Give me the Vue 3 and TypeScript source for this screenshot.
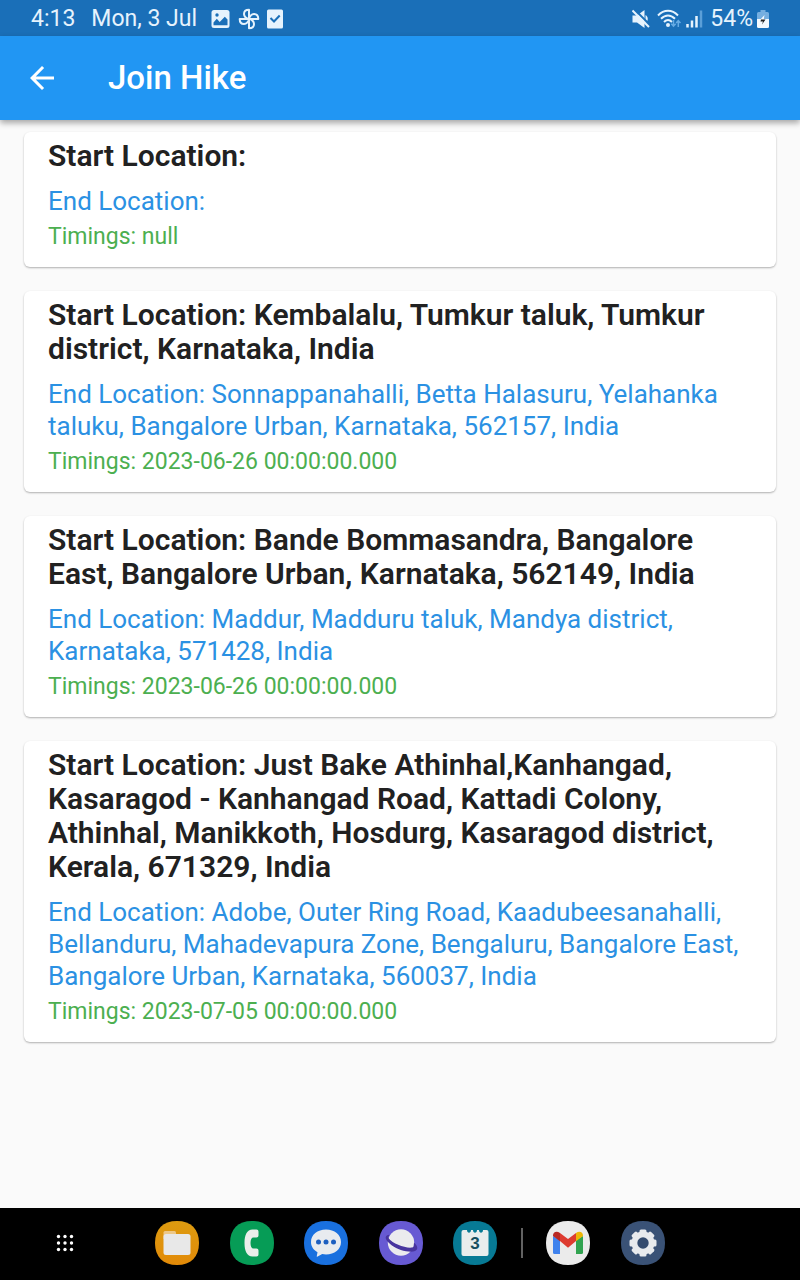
<script setup lang="ts">
interface Hike {
  start: string
  end: string
  timings: string
}

const hikes: Hike[] = [
  { start: '', end: '', timings: 'null' },
  {
    start: 'Kembalalu, Tumkur taluk, Tumkur district, Karnataka, India',
    end: 'Sonnappanahalli, Betta Halasuru, Yelahanka taluku, Bangalore Urban, Karnataka, 562157, India',
    timings: '2023-06-26 00:00:00.000',
  },
  {
    start: 'Bande Bommasandra, Bangalore East, Bangalore Urban, Karnataka, 562149, India',
    end: 'Maddur, Madduru taluk, Mandya district, Karnataka, 571428, India',
    timings: '2023-06-26 00:00:00.000',
  },
  {
    start:
      'Just Bake Athinhal,Kanhangad, Kasaragod - Kanhangad Road, Kattadi Colony, Athinhal, Manikkoth, Hosdurg, Kasaragod district, Kerala, 671329, India',
    end: 'Adobe, Outer Ring Road, Kaadubeesanahalli, Bellanduru, Mahadevapura Zone, Bengaluru, Bangalore East, Bangalore Urban, Karnataka, 560037, India',
    timings: '2023-07-05 00:00:00.000',
  },
]

const squircle = 'M22 0C36 0 44 8 44 22S36 44 22 44 0 36 0 22 8 0 22 0Z'
const dots = [2.5, 9, 15.5]
const teeth = [0, 45, 90, 135, 180, 225, 270, 315]
</script>

<template>
  <div class="screen">
    <div class="status">
      <span class="clock">4:13</span>
      <span class="date">Mon, 3 Jul</span>
      <svg class="st-icon" width="20" height="20" viewBox="0 0 20 20" aria-hidden="true">
        <rect x="0.500" y="1" width="18" height="18" rx="2.500" fill="#e6f3fd" />
        <circle cx="6" cy="6" r="1.700" fill="#1a6fb8" />
        <path d="M2.500 16.200V13.500L5.800 9.800L8.700 13L13.800 7.700L16.500 10.500V16.200Z" fill="#1a6fb8" />
      </svg>
      <svg class="st-icon" width="22" height="22" viewBox="0 0 22 22" aria-hidden="true">
        <g fill="none" stroke="#e6f3fd" stroke-width="2" stroke-linejoin="round">
          <path
            v-for="a in [0, 90, 180, 270]"
            :key="a"
            :transform="`rotate(${a} 11 11)`"
            d="M11 11V1.700C7.500 1.700 6 3.800 6 6C6 7.400 6.600 8.400 7.400 9.200C8.400 10.300 9.700 11 11 11Z"
          />
        </g>
      </svg>
      <svg class="st-icon" width="16" height="20" viewBox="0 0 16 20" aria-hidden="true">
        <rect y="0.500" width="16" height="19" rx="1.500" fill="#e6f3fd" />
        <path d="M3.500 9L7 12.500L12.700 6.500" fill="none" stroke="#1a6fb8" stroke-width="2" />
      </svg>
      <span class="spacer"></span>
      <svg class="mute" width="18" height="20" viewBox="0 0 18 20" aria-hidden="true">
        <path d="M0.500 6.500H5L12.500 1V19L5 13.500H0.500Z" fill="#e6f3fd" />
        <path d="M13.500 6C16.500 8 16.500 11.500 13.500 14Z" fill="#e6f3fd" />
        <path d="M2.500 0.500L18 16" stroke="#1a6fb8" stroke-width="2" />
        <path d="M0.500 1.500L17 18" stroke="#e6f3fd" stroke-width="2" />
      </svg>
      <svg class="wifi" width="24" height="20" viewBox="0 0 24 20" aria-hidden="true">
        <g fill="none" stroke="#e6f3fd" stroke-width="2">
          <path d="M1 6.500C7 0.300 15 0.300 21 6.500" />
          <path d="M4 9.800C8.500 5.300 13.500 5.300 18 9.800" />
          <path d="M7 13C9.800 10.200 12.200 10.200 15 13" />
        </g>
        <circle cx="11" cy="16" r="2" fill="#e6f3fd" />
        <path d="M16.500 11V17M14.300 14.800L16.500 17.200L18.700 14.800M21.300 18V12M19.100 14L21.300 11.700L23.500 14" fill="none" stroke="#66abe4" stroke-width="1.500" />
      </svg>
      <svg class="signal" width="17" height="20" viewBox="0 0 17 20" aria-hidden="true">
        <path d="M1.500 15V18.500M6 11.500V18.500M10.500 7V18.500" stroke="#e6f3fd" stroke-width="2.500" />
        <path d="M15 1.500V18.500" stroke="#5b9fd8" stroke-width="2.500" />
      </svg>
      <span class="percent">54%</span>
      <svg class="battery" width="12" height="20" viewBox="0 0 12 20" aria-hidden="true">
        <path d="M3.500 1H8.500V3H10.500Q12 3 12 4.500V10H0V4.500Q0 3 1.500 3H3.500Z" fill="#76afe0" />
        <path d="M0 10H12V17.500Q12 19 10.500 19H1.500Q0 19 0 17.500Z" fill="#f4faff" />
        <path d="M7.500 6L2.500 11.500H6V16L9.500 10H6.800Z" fill="#f4faff" />
        <path d="M4 10.500H8.500L5 15.500L6 12.500H3.500Z" fill="#222" />
      </svg>
    </div>

    <header class="appbar">
      <button class="back" type="button" aria-label="Back">
        <svg width="36" height="36" viewBox="0 0 24 24" aria-hidden="true">
          <path fill="#fff" d="M20 11H7.830l5.590-5.590L12 4l-8 8 8 8 1.410-1.410L7.830 13H20v-2z" />
        </svg>
      </button>
      <h1>Join Hike</h1>
    </header>

    <main class="list">
      <article v-for="(hike, i) in hikes" :key="i" class="card">
        <h2 class="start">Start Location: {{ hike.start }}</h2>
        <p class="end">End Location: {{ hike.end }}</p>
        <p class="timings">Timings: {{ hike.timings }}</p>
      </article>
    </main>

    <nav class="dock" aria-label="Taskbar">
      <button type="button" aria-label="All apps" class="apps">
        <svg width="18" height="18" viewBox="0 0 18 18">
          <template v-for="y in dots" :key="y">
            <circle v-for="x in dots" :key="x" :cx="x" :cy="y" r="1.700" fill="#fff" />
          </template>
        </svg>
      </button>
      <div class="group main-apps">
        <button type="button" aria-label="My Files">
          <svg width="44" height="44" viewBox="0 0 44 44">
            <defs>
              <linearGradient id="files" x2="0" y2="1"><stop stop-color="#dd9b10" /><stop offset="1" stop-color="#e28a08" /></linearGradient>
            </defs>
            <path :d="squircle" fill="url(#files)" />
            <path d="M8.500 18V11.500Q8.500 10 10 10H19.500Q21 10 21 11.500V18Z" fill="#edc888" />
            <rect x="8.500" y="13" width="27" height="21" rx="2.500" fill="#e8e8e8" />
          </svg>
        </button>
        <button type="button" aria-label="Phone">
          <svg width="44" height="44" viewBox="0 0 44 44">
            <path :d="squircle" fill="#069c56" />
            <path
              d="M26.500 8.500H22.500C17 8.500 14.500 14 14.500 22S17 35.500 22.500 35.500H26.500Q28.500 35.500 28.500 33.500V29.500Q28.500 27.500 26.500 27.500H23.500C21.500 27.500 20.500 25.500 20.500 22S21.500 16.500 23.500 16.500H26.500Q28.500 16.500 28.500 14.500V10.500Q28.500 8.500 26.500 8.500Z"
              fill="#e9eeea"
            />
          </svg>
        </button>
        <button type="button" aria-label="Messages">
          <svg width="44" height="44" viewBox="0 0 44 44">
            <path :d="squircle" fill="#1970df" />
            <path
              d="M22 8.500C30.500 8.500 37 13.700 37 21S30.500 33.500 22 33.500C20.500 33.500 19.500 33.400 18.200 33.100L13.200 35.800Q12.500 36 12.800 35L13.500 31.200C9.500 29 7 25.500 7 21C7 13.700 13.500 8.500 22 8.500Z"
              fill="#e8ebef"
            />
            <g fill="#1d5fc0"><circle cx="14.500" cy="21" r="2.500" /><circle cx="22" cy="21" r="2.500" /><circle cx="29.500" cy="21" r="2.500" /></g>
          </svg>
        </button>
        <button type="button" aria-label="Internet">
          <svg width="44" height="44" viewBox="0 0 44 44">
            <path :d="squircle" fill="#675ad3" />
            <circle cx="22" cy="21.500" r="13.200" fill="#ebebee" />
            <path
              d="M10.500 13.800C6 14 5.300 17.500 9.500 21.500C13.500 25.500 20 29 27 30.300C33 31.300 37.500 30.500 38.200 27.800C38.700 26 37.500 24 35 21.600C35 22.500 34.900 23.400 34.700 24.300C35.200 25.500 34.500 26.200 33 26.500C26.500 27.500 13.500 22.500 10 17.800C9.100 16.500 9.300 15.800 10.500 13.800Z"
              fill="#48359f"
            />
          </svg>
        </button>
        <button type="button" aria-label="Calendar">
          <svg width="44" height="44" viewBox="0 0 44 44">
            <path :d="squircle" fill="#077a95" />
            <path
              d="M10.500 9H14C14 12.600 18 12.600 18 9H20C20 12.600 24 12.600 24 9H26C26 12.600 30 12.600 30 9H33.500Q35.500 9 35.500 11V33Q35.500 35 33.500 35H10.500Q8.500 35 8.500 33V11Q8.500 9 10.500 9Z"
              fill="#e9eded"
            />
            <text x="22" y="28" text-anchor="middle" class="day">3</text>
          </svg>
        </button>
      </div>
      <span class="divider"></span>
      <div class="group recent">
        <button type="button" aria-label="Gmail">
          <svg width="44" height="44" viewBox="0 0 44 44">
            <path :d="squircle" fill="#ebebeb" />
            <path d="M7 15V31.500Q7 33 8.500 33H14V19Z" fill="#3f82ed" />
            <path d="M30 19V33H35.500Q37 33 37 31.500V15Z" fill="#31a350" />
            <path d="M14 20V12L22 18L30 12V20L22 26.800Z" fill="#dd3b30" />
            <path d="M7 14.500C7 10.500 11 9.500 14 12V20.200L7 15Z" fill="#b92823" />
            <path d="M37 14.500C37 10.500 33 9.500 30 12V20.200L37 15Z" fill="#eeb506" />
          </svg>
        </button>
        <button type="button" aria-label="Settings">
          <svg width="44" height="44" viewBox="0 0 44 44">
            <path :d="squircle" fill="#3a5276" />
            <g fill="#e8eaed">
              <circle cx="22" cy="22" r="11.500" />
              <rect v-for="a in teeth" :key="a" x="18.500" y="8.500" width="7" height="7" rx="1.500" :transform="`rotate(${a} 22 22)`" />
            </g>
            <circle cx="22" cy="22" r="5.700" fill="#344b6e" />
          </svg>
        </button>
      </div>
    </nav>
  </div>
</template>

<style>
body {
  margin: 0;
  background: #fafafa;
}
</style>

<style scoped>
.screen {
  display: flex;
  flex-direction: column;
  min-height: 100vh;
  background: #fafafa;
  font-family: Roboto, "Noto Sans", sans-serif;
}

button {
  display: flex;
  padding: 0;
  border: 0;
  background: none;
  cursor: pointer;
}

svg {
  display: block;
  flex: none;
}

.status {
  display: flex;
  align-items: center;
  box-sizing: border-box;
  height: 36px;
  padding: 2px 31px 0;
  background: #1a6fb8;
  color: #e6f3fd;
  font-size: 23px;
  line-height: 34px;
}

.date {
  margin: 0 14px 0 16px;
}

.st-icon {
  margin-right: 7px;
}

.spacer {
  flex: 1;
}

.mute {
  margin-right: 7px;
}

.wifi {
  margin-right: 5px;
}

.signal {
  margin-right: 7px;
}

.battery {
  margin-left: 4px;
}

.appbar {
  display: flex;
  align-items: center;
  gap: 48px;
  height: 84px;
  padding: 0 24px;
  background: #2196f3;
  box-shadow: 0 3px 6px rgba(0, 0, 0, 0.34);
  color: #fff;
}

h1 {
  margin: 0;
  font-size: 33px;
  font-weight: 500;
  line-height: 40px;
}

.list {
  display: flex;
  flex: 1;
  flex-direction: column;
  gap: 24px;
  padding: 12px 24px 24px;
}

.card {
  padding: 7px 24px 17px;
  border-radius: 6px;
  background: #fff;
  box-shadow: 0 1px 2px rgba(0, 0, 0, 0.3);
}

.card h2,
.card p {
  margin: 0;
}

.card .start {
  color: #212121;
  font-size: 30px;
  font-weight: 600;
  line-height: 34px;
}

.card .end {
  margin-top: 12px;
  color: #2b91e3;
  font-size: 26px;
  line-height: 32px;
}

.card .timings {
  margin-top: 6px;
  color: #4caf50;
  font-size: 23px;
  line-height: 27px;
}

.dock {
  display: flex;
  align-items: center;
  box-sizing: border-box;
  height: 72px;
  padding: 0 56px 2px;
  background: #000;
}

.group {
  display: flex;
  justify-content: space-between;
}

.main-apps {
  width: 342px;
  margin-left: 81px;
}

.divider {
  width: 2px;
  height: 30px;
  margin: 0 23px 0 24px;
  background: #626262;
}

.recent {
  width: 119px;
}

.day {
  fill: #174e60;
  font-size: 17px;
  font-weight: 700;
}
</style>
